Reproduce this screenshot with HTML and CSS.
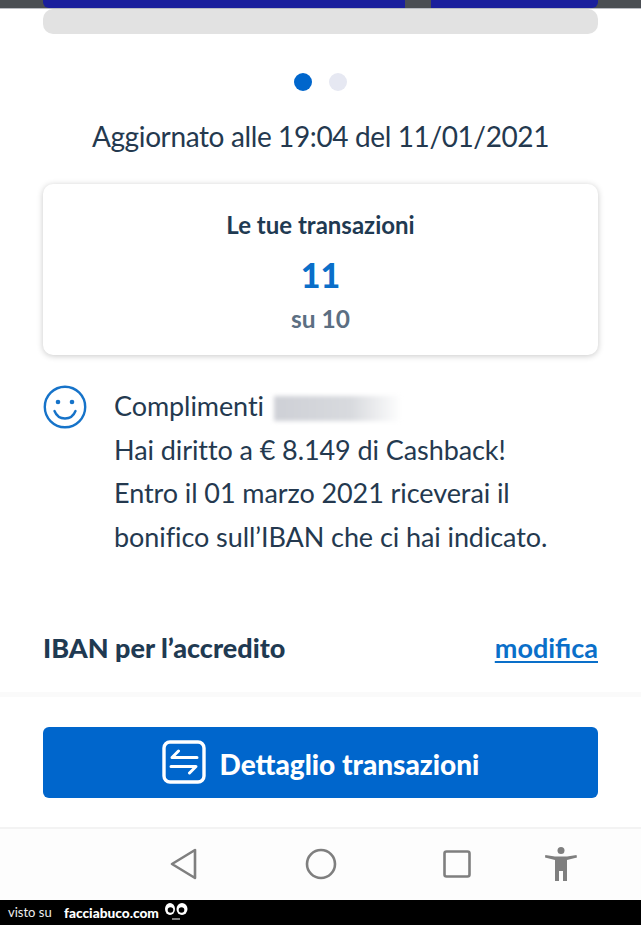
FILE: index.html
```html
<!DOCTYPE html>
<html lang="it">
<head>
<meta charset="utf-8">
<title>Cashback</title>
<link rel="stylesheet" href="styles.css">
</head>
<body>
<div class="page">
  <div class="strip">
    <div class="banner banner-main"></div>
    <div class="banner banner-next"></div>
  </div>
  <div class="skeleton"></div>
  <div class="dots"><span class="dot dot-on"></span><span class="dot"></span></div>
  <p class="updated">Aggiornato alle 19:04 del 11/01/2021</p>
  <section class="card">
    <h2 class="card-title">Le tue transazioni</h2>
    <div class="card-count">11</div>
    <div class="card-of">su 10</div>
  </section>
  <section class="message">
    <svg class="smile" viewBox="0 0 44 44" width="44" height="44" aria-hidden="true">
      <circle cx="22" cy="22" r="20.2" fill="none" stroke="#1673c9" stroke-width="2.4"/>
      <circle cx="15" cy="17" r="2.3" fill="#1673c9"/>
      <circle cx="29" cy="17" r="2.3" fill="#1673c9"/>
      <path d="M11.5 26c2 5 6 7.500 10.500 7.500S30.500 31 32.500 26" fill="none" stroke="#1673c9" stroke-width="2.400" stroke-linecap="round"/>
    </svg>
    <p class="message-text">Complimenti <span class="blurred"></span><br>Hai diritto a € 8.149 di Cashback!<br>Entro il 01 marzo 2021 riceverai il<br>bonifico sull’IBAN che ci hai indicato.</p>
  </section>
  <div class="iban">
    <strong class="iban-label">IBAN per l’accredito</strong>
    <a class="iban-link" href="#">modifica</a>
  </div>
  <div class="action">
    <button class="cta" type="button">
      <svg class="cta-icon" viewBox="0 0 44 44" width="44" height="44" aria-hidden="true">
        <rect x="2" y="2" width="40" height="40" rx="6" fill="none" stroke="#fff" stroke-width="3.400"/>
        <path d="M35 17.500H10l6.500-6.500M9 26.500h25l-6.500 6.500" fill="none" stroke="#fff" stroke-width="3" stroke-linecap="round" stroke-linejoin="round"/>
      </svg>
      <span>Dettaglio transazioni</span>
    </button>
  </div>
  <nav class="navbar">
    <svg class="nav-back" viewBox="0 0 27 32" width="27" height="32" aria-hidden="true"><path d="M25 2v28L2 16z" fill="none" stroke="#7f7f7f" stroke-width="2.600" stroke-linejoin="round"/></svg>
    <svg class="nav-home" viewBox="0 0 32 32" width="32" height="32" aria-hidden="true"><circle cx="16" cy="16" r="14" fill="none" stroke="#7f7f7f" stroke-width="2.600"/></svg>
    <svg class="nav-recent" viewBox="0 0 28 28" width="28" height="28" aria-hidden="true"><rect x="1.500" y="1.500" width="25" height="25" rx="2" fill="none" stroke="#7f7f7f" stroke-width="2.600"/></svg>
    <svg class="nav-access" viewBox="0 0 32 36" width="32" height="36" aria-hidden="true"><circle cx="16" cy="3.500" r="3.500" fill="#7f7f7f"/><path d="M.300 8L10 9.500h12L31.500 8l.500 2.500L22 13v21h-4V24h-4v10h-4V13L0 10.500z" fill="#7f7f7f"/></svg>
  </nav>
  <footer class="footer">
    <span class="visto">visto su</span>
    <span class="brand">facciabuco.com</span>
    <svg class="eyes" viewBox="0 0 24 20" width="24" height="20" aria-hidden="true">
      <ellipse cx="6" cy="6" rx="5" ry="6" fill="#fff"/><ellipse cx="18" cy="6" rx="5.500" ry="6" fill="#fff"/>
      <circle cx="6.500" cy="7" r="2.800" fill="#000"/><circle cx="17.500" cy="7" r="2.800" fill="#000"/>
      <path d="M8 16h8" stroke="#aaa" stroke-width="1.500"/>
    </svg>
  </footer>
</div>
</body>
</html>
```
FILE: styles.css
```css
* { box-sizing: border-box; }
html, body { margin: 0; padding: 0; background: #fff; }
body { font-family: "Lato", "Liberation Sans", sans-serif; color: #1f3a52; }
.page { width: 641px; height: 925px; display: flex; flex-direction: column; overflow: hidden; }
.strip { height: 9px; background: #4a4e53; border-bottom: 1px solid #b9bcc2; display: flex; padding-left: 43px; padding-right: 43px; gap: 26px; flex: none; }
.banner { height: 8px; background: #1a1f9c; }
.banner-main { width: 362px; border-bottom-left-radius: 6px; }
.banner-next { flex: 1; border-bottom-right-radius: 6px; }
.skeleton { height: 25px; margin: 0 43px; background: #e2e2e2; border-radius: 10px; flex: none; }
.dots { display: flex; justify-content: center; gap: 17px; margin-top: 39px; height: 18px; padding-right: 1px; flex: none; }
.dot { width: 18px; height: 18px; border-radius: 50%; background: #e6e8f2; }
.dot-on { background: #0066cc; }
.updated { margin: 25px 0 0; height: 40px; line-height: 40px; font-size: 28px; letter-spacing: -.38px; text-align: center; color: #24394f; flex: none; }
.card { margin: 28px 43px 0; height: 171px; border-radius: 10px; background: #fff; box-shadow: 0 1px 6px rgba(0, 0, 0, .22); display: flex; flex-direction: column; align-items: center; flex: none; }
.card-title { margin: 26px 0 0; font-size: 24px; line-height: 30px; font-weight: 700; color: #1f3a52; }
.card-count { margin-top: 14px; font-size: 34px; line-height: 42px; font-weight: 900; color: #0a6fc9; }
.card-of { margin-top: 8px; font-size: 24.500px; line-height: 30px; font-weight: 700; color: #5c6f82; }
.message { display: flex; align-items: flex-start; margin: 28px 43px 0; gap: 27px; flex: none; }
.smile { flex: none; margin-top: 2px; }
.message-text { margin: 1px 0 0; font-size: 27px; line-height: 43.7px; letter-spacing: -.08px; color: #24394f; white-space: nowrap; }
.blurred { display: inline-block; width: 128px; height: 25px; margin-left: 3px; vertical-align: -5px; background: linear-gradient(90deg, #ced0d6 0, #d8dade 60%, #fff 100%); filter: blur(2px); }
.iban { display: flex; justify-content: space-between; align-items: center; margin: 69px 43px 0; height: 40px; flex: none; }
.iban-label { font-size: 27px; font-weight: 900; color: #1f3a52; }
.iban-link { font-size: 27px; font-weight: 700; color: #0a6fc9; text-decoration: underline; text-decoration-thickness: 2px; text-underline-offset: 3px; }
.action { margin-top: 24px; height: 135px; border-top: 5px solid #fafafa; padding: 30px 43px 0; flex: none; }
.cta { width: 100%; height: 71px; border: 0; border-radius: 6px; background: #0066cc; color: #fff; font: 900 28px "Lato", "Liberation Sans", sans-serif; display: flex; align-items: center; justify-content: center; gap: 14px; padding: 0; }
.cta span { margin-top: 3px; }
.navbar { position: relative; height: 73px; background: #fdfdfd; border-top: 2px solid #f3f3f3; flex: none; }
.navbar svg { position: absolute; }
.nav-back { left: 170px; top: 19px; }
.nav-home { left: 305px; top: 19px; }
.nav-recent { left: 443px; top: 21px; }
.nav-access { left: 545px; top: 18px; }
.footer { height: 25px; background: #000; color: #fff; display: flex; align-items: center; padding-left: 8px; flex: none; }
.visto { font-size: 13px; width: 56px; color: #eee; }
.brand { font-size: 13.700px; font-weight: 900; }
.eyes { margin: 1px 0 0 5px; }
```
